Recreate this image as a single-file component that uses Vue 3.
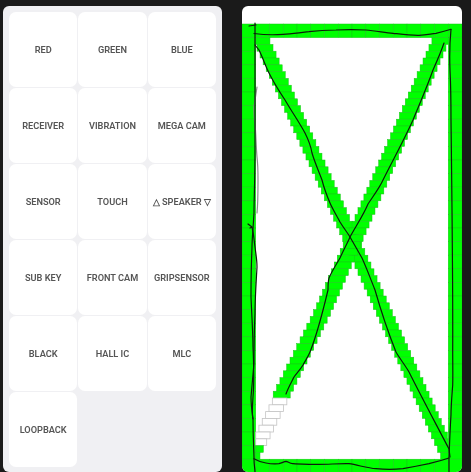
<script setup>
const labels = ['RED','GREEN','BLUE','RECEIVER','VIBRATION','MEGA CAM','SENSOR','TOUCH','△ SPEAKER ▽','SUB KEY','FRONT CAM','GRIPSENSOR','BLACK','HALL IC','MLC','LOOPBACK']

const X0 = 242, Y0 = 24, CW = 13.75, RH = 13.6, COLS = 16, ROWS = 33
const band = []
for (let c = 0; c < COLS; c++) {
  for (let r = 0; r < ROWS; r++) {
    if (c === 0 || c === COLS - 1 || r === 0 || r === ROWS - 1) {
      band.push({ x: X0 + c * CW, y: Y0 + r * RH, w: CW, h: RH })
    }
  }
}

const LEFT = 255.75, RIGHT = 448.25, TOP = 37.6, STEP = 6.8
const diagA = []
const diagB = []
for (let i = 0; i < 62; i++) {
  const y = TOP + i * STEP
  const mid = y + 3.4
  const l = 257 + (mid - 50) * 0.45 + 1
  const xa = Math.max(LEFT, l)
  const ra = Math.min(RIGHT, l + 16)
  diagA.push({ x: xa, y, w: ra - xa, h: STEP })
  const untouched = i >= 53 && i <= 59
  const right = mid < 310 ? 445 - (mid - 50) * 0.435 : 332 - (mid - 310) * 0.494
  const width = untouched ? 14.5 : 17
  const xb = Math.max(LEFT, right - width)
  const rb = Math.min(RIGHT, right)
  diagB.push({ x: xb, y, w: rb - xb, h: STEP, untouched })
}

const strokes = [
  'M249 26 L256 25 M255 23 C255 40 255 80 255 147 C255 180 254 200 254 213 C253 230 252 240 252 247 C251 270 251 285 251 297 C252 320 253 335 253 347 C254 370 254 385 253 397 C252 410 252 415 253 419 C253 440 254 450 254 459 C254 465 255 469 255 472',
  'M248 224 L252 227 L250 228 M252 227 C254 235 254 240 255 247 C256 255 257 260 257 267 C256 285 255 300 255 313 C254 335 254 350 254 363 C253 375 252 385 251 397 C251 405 252 412 253 419',
  'M254 33.5 C265 35 275 35 283 34.3 C292 34 300 32.5 309 31.7 C318 30.5 327 30 336 30 C346 29.5 356 29.5 366 30 C376 31 385 32.5 393 33.3 C402 34.3 411 35.5 419 35.3 C426 35 430 34 436 33.3 C442 32 447 30.5 451 29.3',
  'M451 29.3 C449.5 45 449.5 58 450 70 C451 90 451 105 451 120 C452 200 453 280 452.7 352 C452.7 362 453 375 452.7 385 C452 395 451 405 451 415 C450 430 449.5 445 449 458 C449 463 449 468 449 472',
  'M254 458.7 C258 461 262 462.5 266 463 C271 464 275 464 279 463.7 C282 463 284 461.5 286 461.3 C288 461.5 290 464 293 463.7 C302 464 310 464.3 319 464.3 C329 464.3 339 463.5 349 463.7 C358 465 367 468 376 468.7 C385 469.5 394 469.5 403 468.7 C412 467 420 465.5 429 463.7 C436 462 443 460 449 458',
  'M255 45 L259 50 C263 58 265 65 269 73 C274 83 279 91 285 100 C292 112 299 122 305 133 C309 141 311 147 312 153 C315 163 319 172 322 180 C324 188 327 196 330 203 C333 210 337 216 340 222 C343 227 347 232 350 237 C354 244 358 251 362 258 C367 269 371 280 375 290 C381 311 388 332 396 352 C400 359 405 365 409 372 C422 398 436 424 449 449 L450 457',
  'M444 43 C441 52 437 61 433 70 C427 87 420 103 413 120 C404 140 393 160 383 180 C380 187 374 195 368 204 C364 214 356 226 350 237 C347 244 343 251 340 258 C336 265 332 271 329 278 C328 282 328 286 328 290 C323 311 318 332 310 352 C308 357 305 361 303 365 C300 370 297 373 294 377 C291 383 288 388 286 394',
]
const faint = 'M257 87 C256 94 255 100 254 107 C254 112 254 118 255 123 C256 135 256 146 257 157 C258 165 258 172 258 180 C258 192 258 203 257 213'
</script>

<template>
  <div class="page">
    <section class="menu">
      <div v-for="label in labels" :key="label" class="tile">{{ label }}</div>
    </section>
    <section class="canvas">
      <svg class="drawing" viewBox="242 6 220 466" width="220" height="466">
        <g class="cell">
          <rect v-for="(c, i) in band" :key="'b' + i" :x="c.x" :y="c.y" :width="c.w" :height="c.h" />
          <rect v-for="(c, i) in diagA" :key="'a' + i" :x="c.x" :y="c.y" :width="c.w" :height="c.h" />
          <rect v-for="(c, i) in diagB" :key="'d' + i" :class="{ blank: c.untouched }" :x="c.x" :y="c.y" :width="c.w" :height="c.h" />
        </g>
        <path class="faint" :d="faint" />
        <path v-for="(d, i) in strokes" :key="'s' + i" class="pen" :d="d" />
      </svg>
    </section>
  </div>
</template>

<style scoped>
.page {
  width: 471px;
  height: 472px;
  box-sizing: border-box;
  padding: 6px 9px 0 3px;
  display: flex;
  gap: 20px;
  background: #1a1a1a;
  overflow: hidden;
}
.menu {
  width: 219px;
  height: 466px;
  box-sizing: border-box;
  padding: 6px;
  border-radius: 6px;
  background: #f0f0f3;
  display: grid;
  grid-template-columns: repeat(3, 1fr);
  grid-auto-rows: 75px;
  gap: 1px;
  align-content: start;
  filter: blur(0.35px);
}
.tile {
  background: #fff;
  border-radius: 7px;
  display: flex;
  align-items: center;
  justify-content: center;
  font-family: Roboto, "Liberation Sans", sans-serif;
  font-weight: 600;
  font-size: 9.2px;
  color: #555;
  white-space: nowrap;
}
.canvas {
  width: 220px;
  height: 466px;
  border-radius: 6px;
  overflow: hidden;
  background: #fff;
  filter: blur(0.35px);
}
.drawing {
  display: block;
}
.cell rect {
  fill: #00ff00;
  stroke: #19c419;
  stroke-width: 0.5;
}
.cell rect.blank {
  fill: #fff;
  stroke: #c4c4c4;
  stroke-width: 0.8;
}
.pen {
  fill: none;
  stroke: #0c1c0b;
  stroke-width: 1.2;
  stroke-linecap: round;
  stroke-linejoin: round;
}
.faint {
  fill: none;
  stroke: #8a8a8a;
  stroke-width: 1.2;
  stroke-linecap: round;
}
</style>
